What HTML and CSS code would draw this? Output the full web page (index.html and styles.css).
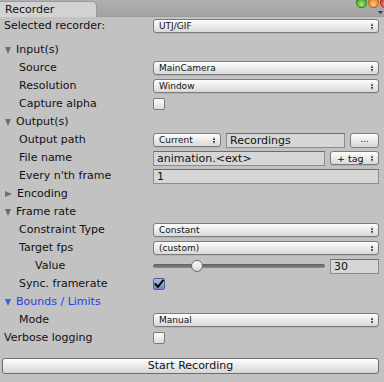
FILE: index.html
```html
<!DOCTYPE html>
<html>
<head>
<meta charset="utf-8">
<link rel="stylesheet" href="styles.css">
</head>
<body>
<div class="window">
  <div class="tabbar">
    <div class="tab">Recorder</div>
    <div class="lights">
      <span class="light green"></span>
      <span class="light orange"></span>
      <span class="light red"></span>
    </div>
    <svg class="menu-arrow" width="5" height="3" viewBox="0 0 5 3"><path d="M0 0H5L2.5 3Z" fill="#333"/></svg>
  </div>
  <div class="panel">
    <div class="row">
      <div class="label l0">Selected recorder:</div>
      <div class="popup"><span>UTJ/GIF</span><i class="arrows"></i></div>
    </div>
    <div class="spacer"></div>
    <div class="row">
      <div class="label head"><span class="tri down"></span>Input(s)</div>
    </div>
    <div class="row">
      <div class="label l1">Source</div>
      <div class="popup"><span>MainCamera</span><i class="arrows"></i></div>
    </div>
    <div class="row">
      <div class="label l1">Resolution</div>
      <div class="popup"><span>Window</span><i class="arrows"></i></div>
    </div>
    <div class="row">
      <div class="label l1">Capture alpha</div>
      <div class="ctl"><span class="check"></span></div>
    </div>
    <div class="row">
      <div class="label head"><span class="tri down"></span>Output(s)</div>
    </div>
    <div class="row">
      <div class="label l1">Output path</div>
      <div class="ctl split">
        <div class="popup w-current"><span>Current</span><i class="arrows"></i></div>
        <div class="field grow">Recordings</div>
        <div class="button w-dots">...</div>
      </div>
    </div>
    <div class="row">
      <div class="label l1">File name</div>
      <div class="ctl split">
        <div class="field grow">animation.&lt;ext&gt;</div>
        <div class="popup w-tag"><span class="big">+ tag</span><i class="arrows"></i></div>
      </div>
    </div>
    <div class="row">
      <div class="label l1">Every n'th frame</div>
      <div class="field">1</div>
    </div>
    <div class="row">
      <div class="label head"><span class="tri right"></span>Encoding</div>
    </div>
    <div class="row">
      <div class="label head"><span class="tri down"></span>Frame rate</div>
    </div>
    <div class="row">
      <div class="label l1">Constraint Type</div>
      <div class="popup"><span>Constant</span><i class="arrows"></i></div>
    </div>
    <div class="row">
      <div class="label l1">Target fps</div>
      <div class="popup"><span>(custom)</span><i class="arrows"></i></div>
    </div>
    <div class="row">
      <div class="label l2">Value</div>
      <div class="ctl split">
        <div class="slider grow"><div class="track"></div><div class="thumb" style="left: 38px"></div></div>
        <div class="field w-value">30</div>
      </div>
    </div>
    <div class="row">
      <div class="label l1">Sync. framerate</div>
      <div class="ctl"><span class="check on"><svg width="10" height="10" viewBox="0 0 10 10"><path d="M1.5 5.2L4 7.8L8.8 1.5" fill="none" stroke="#000" stroke-width="1.9" stroke-linecap="square"/></svg></span></div>
    </div>
    <div class="row">
      <div class="label head blue"><span class="tri down blue"></span>Bounds / Limits</div>
    </div>
    <div class="row">
      <div class="label l1">Mode</div>
      <div class="popup"><span>Manual</span><i class="arrows"></i></div>
    </div>
    <div class="row">
      <div class="label l0">Verbose logging</div>
      <div class="ctl"><span class="check"></span></div>
    </div>
    <div class="bottom">
      <div class="bigbutton">Start Recording</div>
    </div>
  </div>
</div>
</body>
</html>
```

FILE: styles.css
```css
* { box-sizing: border-box; }
html, body {
  margin: 0;
  padding: 0;
  width: 384px;
  height: 382px;
  overflow: hidden;
  background: #c2c2c2;
  font-family: "DejaVu Sans", "Noto Sans", sans-serif;
  font-size: 11px;
  color: #111;
}
.window {
  width: 384px;
  height: 382px;
  display: flex;
  flex-direction: column;
}
.tabbar {
  height: 17px;
  background: linear-gradient(#b0b0b0, #a2a2a2);
  display: flex;
  align-items: flex-end;
  position: relative;
  border-bottom: 1px solid #9a9a9a;
}
.tab {
  width: 97px;
  height: 16px;
  margin-bottom: -1px;
  background: #d2d2d2;
  border: 1px solid #9a9a9a;
  border-bottom: none;
  border-left: none;
  border-top-right-radius: 5px;
  padding-left: 5px;
  line-height: 15px;
  font-size: 11px;
  color: #111;
}
.lights {
  margin-left: auto;
  align-self: flex-start;
  display: flex;
  gap: 1px;
  margin-top: -3px;
  margin-right: -7px;
}
.light {
  width: 11px;
  height: 11px;
  border-radius: 50%;
  border: 1px solid rgba(0,0,0,0.25);
}
.green { background: radial-gradient(circle at 50% 70%, #a6ee7a, #4aa326 70%); }
.orange { background: radial-gradient(circle at 50% 70%, #ffd08a, #e9801d 70%); }
.red { background: radial-gradient(circle at 50% 70%, #ff9a8a, #d8382c 70%); }
.menu-arrow {
  position: absolute;
  right: 1px;
  top: 11px;
}
.panel {
  flex: 1;
  display: flex;
  flex-direction: column;
}
.row {
  height: 18px;
  display: grid;
  grid-template-columns: 153px 1fr;
  align-items: center;
  padding-right: 5px;
}
.spacer { height: 6px; }
.label {
  white-space: nowrap;
  font-size: 11px;
  line-height: 18px;
  grid-column: 1;
}
.l0 { padding-left: 4px; }
.l1 { padding-left: 19px; }
.l2 { padding-left: 35px; }
.head {
  padding-left: 5px;
  display: flex;
  align-items: center;
}
.tri {
  display: inline-block;
  width: 0;
  height: 0;
  margin-right: 5px;
}
.tri.down {
  border-left: 3.5px solid transparent;
  border-right: 3.5px solid transparent;
  border-top: 7px solid #6e6e6e;
}
.tri.right {
  border-top: 3.5px solid transparent;
  border-bottom: 3.5px solid transparent;
  border-left: 7px solid #6e6e6e;
}
.tri.down.blue { border-top-color: #3f62d6; }
.blue { color: #1f3fe0; }
.ctl {
  grid-column: 2;
  display: flex;
  align-items: center;
}
.split { gap: 5px; }
.grow { flex: 1; min-width: 0; }
.popup {
  grid-column: 2;
  height: 14px;
  border: 1px solid #7c7c7c;
  border-radius: 3px;
  background: linear-gradient(#fdfdfd, #e8e8e8 60%, #d8d8d8);
  display: flex;
  align-items: center;
  padding-left: 5px;
  padding-right: 4px;
  font-size: 9px;
  color: #111;
  box-shadow: 0 1px 0 rgba(0,0,0,0.08);
}
.popup span { flex: 1; white-space: nowrap; }
.popup span.big { font-size: 9.5px; padding-left: 2px; }
.arrows {
  flex: none;
  width: 3px;
  height: 7px;
  position: relative;
  display: block;
}
.arrows::before, .arrows::after {
  content: "";
  position: absolute;
  left: 0;
  width: 0;
  height: 0;
  border-left: 1.5px solid transparent;
  border-right: 1.5px solid transparent;
}
.arrows::before { top: 0; border-bottom: 3px solid #222; }
.arrows::after { bottom: 0; border-top: 3px solid #222; }
.w-current { width: 68px; flex: none; }
.w-tag { width: 49px; flex: none; padding-left: 4px; }
.field {
  grid-column: 2;
  height: 15px;
  border: 1px solid #8c8c8c;
  border-top-color: #6c6c6c;
  background: #d6d6d6;
  padding-left: 3px;
  font-size: 11px;
  line-height: 13px;
  color: #111;
  white-space: nowrap;
  overflow: hidden;
}
.w-value { width: 49px; flex: none; }
.button {
  height: 15px;
  border: 1px solid #7c7c7c;
  border-radius: 3px;
  background: linear-gradient(#fdfdfd, #e6e6e6 60%, #d6d6d6);
  text-align: center;
  font-size: 9px;
  line-height: 11px;
}
.w-dots { width: 29px; flex: none; }
.check {
  width: 12px;
  height: 12px;
  border: 1px solid #7a7a7a;
  border-radius: 2px;
  background: linear-gradient(#fcfcfc, #dcdcdc);
  display: flex;
  align-items: center;
  justify-content: center;
}
.check.on {
  background: linear-gradient(#a8bde0, #6e8cc0);
  border-color: #4d6590;
}
.slider {
  position: relative;
  height: 14px;
}
.track {
  position: absolute;
  left: 0;
  right: 0;
  top: 5px;
  height: 4px;
  border-radius: 2px;
  background: linear-gradient(#5e5e5e, #8a8a8a);
}
.thumb {
  position: absolute;
  top: 1px;
  width: 12px;
  height: 12px;
  border-radius: 50%;
  border: 1px solid #6a6a6a;
  background: linear-gradient(#ffffff, #d4d4d4);
}
.bottom {
  padding: 11px 5px 0 2px;
}
.bigbutton {
  height: 16px;
  border: 1px solid #6e6e6e;
  border-radius: 3px;
  background: linear-gradient(#fefefe, #e6e6e6 60%, #d6d6d6);
  text-align: center;
  font-size: 11px;
  line-height: 14px;
  color: #111;
}
```
